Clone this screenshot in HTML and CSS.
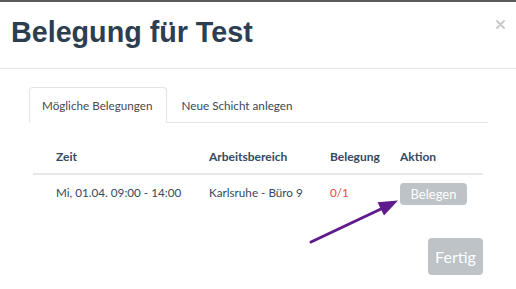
FILE: index.html
```html
<!DOCTYPE html>
<html lang="de">
<head>
<meta charset="utf-8">
<title>Belegung für Test</title>
<link rel="stylesheet" href="styles.css">
</head>
<body>
<div class="modal">
  <div class="modal-header">
    <h1 class="title">Belegung für Test</h1>
    <button class="close" aria-label="Schließen">
      <svg width="9" height="9" viewBox="0 0 9 9"><path d="M1 1L8 8M8 1L1 8" stroke="#c9c9c9" stroke-width="1.8" stroke-linecap="round"/></svg>
    </button>
  </div>
  <div class="modal-body">
    <ul class="tabs">
      <li class="tab active">Mögliche Belegungen</li>
      <li class="tab">Neue Schicht anlegen</li>
    </ul>
    <table class="grid">
      <thead>
        <tr><th class="c1">Zeit</th><th class="c2">Arbeitsbereich</th><th class="c3">Belegung</th><th class="c4">Aktion</th></tr>
      </thead>
      <tbody>
        <tr>
          <td class="c1">Mi, 01.04. 09:00 - 14:00</td>
          <td class="c2">Karlsruhe - Büro 9</td>
          <td class="c3 red">0/1</td>
          <td class="c4"><button class="btn-small">Belegen</button></td>
        </tr>
      </tbody>
    </table>
    <div class="footer">
      <button class="btn-done">Fertig</button>
    </div>
  </div>
  <svg class="arrow" width="516" height="289" viewBox="0 0 516 289">
    <line x1="311" y1="242" x2="382" y2="208.5" stroke="#5f1a8c" stroke-width="3" stroke-linecap="round"/>
    <polygon points="398,200.5 377.5,202.3 384,215.5" fill="#5f1a8c"/>
  </svg>
</div>
</body>
</html>
```
FILE: styles.css
```css
html, body {
  margin: 0;
  padding: 0;
  background: #fff;
}
body {
  width: 516px;
  height: 289px;
  overflow: hidden;
  font-family: Lato, "Open Sans", sans-serif;
  color: #34495e;
}
.modal {
  position: relative;
  border-top: 2px solid #5a5a5a;
  height: 287px;
}
.modal-header {
  display: flex;
  justify-content: space-between;
  align-items: flex-start;
  padding: 15px 11px 20px 11px;
  border-bottom: 1px solid #e6e6e6;
}
.title {
  margin: 0;
  font-family: "Liberation Sans", Arial, sans-serif;
  font-weight: bold;
  font-size: 28.7px;
  line-height: 31px;
  color: #2c3e50;
}
.close {
  margin: 3px 0 0 0;
  padding: 0;
  border: 0;
  background: none;
  display: flex;
}
.modal-body {
  padding: 18px 28px 0 29px;
}
.tabs {
  list-style: none;
  margin: 0;
  padding: 0;
  display: flex;
  border-bottom: 1px solid #e3e3e3;
}
.tab {
  font-size: 11.7px;
  line-height: 16px;
  padding: 9px 13px 9px 12px;
  margin: 0 2px -1px 0;
  border: 1px solid transparent;
  border-radius: 4px 4px 0 0;
  color: #34495e;
}
.tab.active {
  border-color: #e3e3e3;
  border-bottom-color: #fff;
  background: #fff;
  color: #4a4a4a;
}
.grid {
  margin: 16px 5px 0 4px;
  width: 450px;
  border-collapse: collapse;
  table-layout: fixed;
  font-size: 11.7px;
}
.grid th {
  text-align: left;
  font-weight: bold;
  font-size: 12px;
  height: 34px;
  padding: 0 0 0 8px;
  border-bottom: 2px solid #e6e6e6;
  color: #34495e;
}
.grid td {
  height: 33px;
  padding: 0 0 0 8px;
  vertical-align: middle;
  color: #34495e;
}
.grid .c1 { width: 145px; padding-left: 23px; }
.grid .c2 { width: 113px; }
.grid .c3 { width: 62px; }
.grid .c4 { width: 83px; }
.red { color: #e74c3c !important; }
.btn-small {
  font-family: Lato, sans-serif;
  font-size: 13px;
  color: #fff;
  background: #bdc3c7;
  border: 0;
  border-radius: 4px;
  width: 67px;
  height: 22px;
  padding: 0;
  margin-top: 4px;
}
.footer {
  display: flex;
  justify-content: flex-end;
  padding-right: 5px;
  margin-top: 30px;
}
.btn-done {
  font-family: Lato, sans-serif;
  font-size: 16px;
  color: #fff;
  background: #bdc3c7;
  border: 0;
  border-radius: 4px;
  width: 55px;
  height: 37px;
  padding: 0;
}
.arrow {
  position: absolute;
  left: 0;
  top: -2px;
  pointer-events: none;
}
```
